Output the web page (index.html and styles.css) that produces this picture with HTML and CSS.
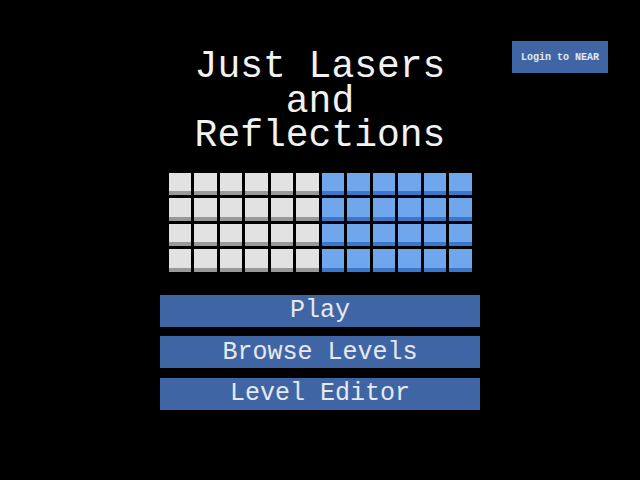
FILE: index.html
```html
<!DOCTYPE html>
<html lang="en">
<head>
    <meta charset="UTF-8">
    <meta name="viewport" content="width=device-width, initial-scale=1.0">
    <title>Just Lasers and Reflections</title>
    <link rel="stylesheet" href="styles.css">
</head>
<body>
    <button id="login-btn" class="login-btn">Login to NEAR</button>

    <div class="menu">
        <h1 class="title">Just Lasers<br>and<br>Reflections</h1>

        <div id="tiles" class="tiles"></div>

        <div class="menu-buttons">
            <button class="menu-btn">Play</button>
            <button class="menu-btn">Browse Levels</button>
            <button class="menu-btn">Level Editor</button>
        </div>
    </div>

    <script>
        // Decorative block of tiles: left half grey, right half blue
        const tiles = document.getElementById('tiles');
        for (let row = 0; row < 4; row++) {
            for (let col = 0; col < 12; col++) {
                const tile = document.createElement('div');
                tile.className = col < 6 ? 'tile tile-grey' : 'tile tile-blue';
                tiles.appendChild(tile);
            }
        }
    </script>
</body>
</html>
```

FILE: styles.css
```css
:root {
    --bg-color: #000000;
    --btn-color: #4065a4;
    --btn-text: #e6e9ef;
    --grey-tile: #e2e2e2;
    --grey-edge: #999999;
    --blue-tile: #6fa6ec;
    --blue-edge: #3b78cc;
    --mono: 'Courier New', Courier, 'Nimbus Mono PS', 'Nimbus Mono L', FreeMono, 'Liberation Mono', monospace;
}

body {
    font-family: var(--mono);
    background-color: var(--bg-color);
    color: #ffffff;
    margin: 0;
    padding: 0;
    width: 640px;
    height: 480px;
    overflow: hidden;
}

.login-btn {
    position: absolute;
    top: 41px;
    right: 32px;
    width: 96px;
    height: 32px;
    background-color: var(--btn-color);
    color: var(--btn-text);
    border: none;
    font-family: var(--mono);
    font-size: 10px;
    font-weight: bold;
    padding: 0;
    cursor: pointer;
}

.menu {
    display: flex;
    flex-direction: column;
    align-items: center;
    padding-top: 50px;
}

.title {
    margin: 0;
    font-size: 38px;
    font-weight: normal;
    line-height: 34.5px;
    text-align: center;
    color: #f2f2f2;
}

.tiles {
    display: grid;
    grid-template-columns: repeat(12, 22.5px);
    grid-auto-rows: 22.5px;
    gap: 3px;
    margin-top: 19px;
}

.tile-grey {
    background-color: var(--grey-tile);
    box-shadow: inset 0 -4px 0 var(--grey-edge);
}

.tile-blue {
    background-color: var(--blue-tile);
    box-shadow: inset 0 -4px 0 var(--blue-edge);
}

.menu-buttons {
    display: flex;
    flex-direction: column;
    gap: 9.5px;
    margin-top: 23px;
}

.menu-btn {
    width: 320px;
    height: 32px;
    padding: 0;
    background-color: var(--btn-color);
    color: var(--btn-text);
    border: none;
    font-family: var(--mono);
    font-size: 25px;
    cursor: pointer;
}

.menu-btn:hover {
    opacity: 0.9;
}
```
